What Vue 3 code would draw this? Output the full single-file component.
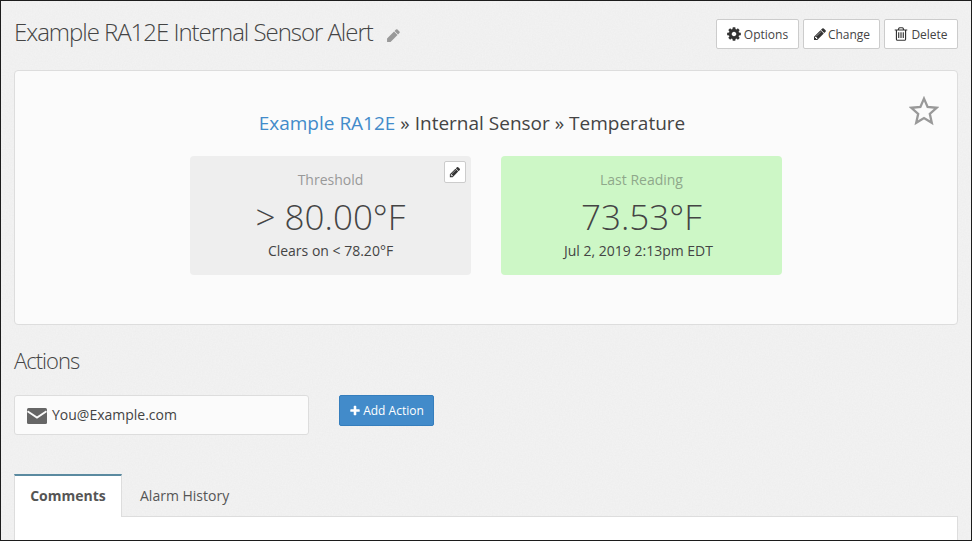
<script setup>
const buttons = [
  { label: 'Options', icon: 'cog', w: 83 },
  { label: 'Change', icon: 'pencil', w: 77 },
  { label: 'Delete', icon: 'trash', w: 74 },
]
const solidPencil = 'M960 416l416 416-832 832h-416v-416zM1643 512q0 53-37 90l-166 166-416-416 166-165q36-38 90-38 53 0 91 38l235 234q37 39 37 91z'
const paths = {
  cog: 'M1152 896q0-106-75-181t-181-75-181 75-75 181 75 181 181 75 181-75 75-181zm512-109v222q0 12-8 23t-20 13l-185 28q-19 54-39 91 35 50 107 138 10 12 10 25t-9 23q-27 37-99 108t-94 71q-12 0-26-9l-138-108q-44 23-91 38-16 136-29 186-7 28-36 28h-222q-14 0-24.5-8.5t-11.5-21.5l-28-184q-49-16-90-37l-141 107q-10 9-25 9-14 0-25-11-126-114-165-168-7-10-7-23 0-12 8-23 15-21 51-66.5t54-70.5q-27-50-41-99l-183-27q-13-2-21-12.5t-8-23.5v-222q0-12 8-23t19-13l186-28q14-46 39-92-40-57-107-138-10-12-10-24 0-10 9-23 26-36 98.5-107.5t94.5-71.5q13 0 26 10l138 107q44-23 91-38 16-136 29-186 7-28 36-28h222q14 0 24.5 8.5t11.5 21.5l28 184q49 16 90 37l142-107q9-9 24-9 13 0 25 10 129 119 165 170 7 8 7 22 0 12-8 23-15 21-51 66.5t-54 70.5q26 50 41 98l183 28q13 2 21 12.5t8 23.5z',
  pencil: 'M491 1536l91-91-235-235-91 91v107h128v128h107zm523-928q0-22-22-22-10 0-17 7l-542 542q-7 7-7 17 0 22 22 22 10 0 17-7l542-542q7-7 7-17zm-54-192l416 416-832 832h-416v-416zm683 96q0 53-37 90l-166 166-416-416 166-165q36-38 90-38 53 0 91 38l235 234q37 39 37 91z',
  trash: 'M704 736v576q0 14-9 23t-23 9h-64q-14 0-23-9t-9-23v-576q0-14 9-23t23-9h64q14 0 23 9t9 23zm256 0v576q0 14-9 23t-23 9h-64q-14 0-23-9t-9-23v-576q0-14 9-23t23-9h64q14 0 23 9t9 23zm256 0v576q0 14-9 23t-23 9h-64q-14 0-23-9t-9-23v-576q0-14 9-23t23-9h64q14 0 23 9t9 23zm128 724v-948h-896v948q0 22 7 40.5t14.5 27 10.5 8.5h832q3 0 10.5-8.5t14.5-27 7-40.5zm-672-1076h448l-48-117q-7-9-17-11h-317q-10 2-17 11zm928 32v64q0 14-9 23t-23 9h-96v948q0 83-47 143.5t-113 60.5h-832q-66 0-113-58.5t-47-141.5v-952h-96q-14 0-23-9t-9-23v-64q0-14 9-23t23-9h309l70-167q15-37 54-63t79-26h320q40 0 79 26t54 63l70 167h309q14 0 23 9t9 23z',
  plus: 'M1600 736v192q0 40-28 68t-68 28h-416v416q0 40-28 68t-68 28h-192q-40 0-68-28t-28-68v-416h-416q-40 0-68-28t-28-68v-192q0-40 28-68t68-28h416v-416q0-40 28-68t68-28h192q40 0 68 28t28 68v416h416q40 0 68 28t28 68z',
}
</script>

<template>
  <div class="frame">
    <svg class="noise" width="972" height="541" aria-hidden="true">
      <filter id="grain" x="0" y="0" width="100%" height="100%">
        <feTurbulence type="fractalNoise" baseFrequency="0.7" numOctaves="2" seed="4" />
        <feColorMatrix type="matrix" values="0 0 0 0 0.55  0 0 0 0 0.55  0 0 0 0 0.55  0 0 0 0.14 -0.03" />
      </filter>
      <rect width="972" height="541" filter="url(#grain)" />
    </svg>
    <div class="page">
      <header class="head">
        <h1 class="title">Example RA12E Internal Sensor Alert</h1>
        <svg class="title-edit" viewBox="0 0 1792 1792"><path :d="solidPencil" /></svg>
        <div class="head-btns">
          <button v-for="b in buttons" :key="b.label" class="btn" :style="{ width: b.w + 'px' }">
            <svg class="ico" :class="'ico-' + b.icon" viewBox="0 0 1792 1792"><path :d="paths[b.icon]" /></svg>{{ b.label }}
          </button>
        </div>
      </header>

      <section class="card">
        <svg class="star" viewBox="0 0 30 30"><polygon points="15,2.6 18.6,11 27.6,11.8 20.8,17.8 22.8,26.8 15,22 7.2,26.8 9.2,17.8 2.4,11.8 11.4,11" /></svg>
        <div class="crumb"><a class="link">Example RA12E</a> » Internal Sensor » Temperature</div>
        <div class="stats">
          <div class="stat grey">
            <button class="mini"><svg viewBox="0 0 1792 1792"><path :d="paths.pencil" /></svg></button>
            <div class="stat-label">Threshold</div>
            <div class="stat-value">&gt; 80.00°F</div>
            <div class="stat-sub">Clears on &lt; 78.20°F</div>
          </div>
          <div class="stat green">
            <div class="stat-label">Last Reading</div>
            <div class="stat-value">73.53°F</div>
            <div class="stat-sub">Jul 2, 2019 2:13pm EDT</div>
          </div>
        </div>
      </section>

      <h2 class="actions-title">Actions</h2>
      <div class="actions">
        <div class="action-item">
          <svg class="mail" viewBox="0 0 20 16">
            <rect width="20" height="16" rx="1.5" />
            <path d="M0.5 3.2 L10 9.6 L19.5 3.2" />
          </svg>
          <span class="mail-text">You@Example.com</span>
        </div>
        <button class="add"><svg viewBox="0 0 1792 1792"><path :d="paths.plus" /></svg>Add Action</button>
      </div>

      <nav class="tabs">
        <div class="tab active">Comments</div>
        <div class="tab">Alarm History</div>
      </nav>
      <div class="panel"></div>
    </div>
  </div>
</template>

<style>
html, body { margin: 0; padding: 0; }
</style>

<style scoped>
.frame {
  position: relative;
  width: 972px;
  height: 541px;
  box-sizing: border-box;
  border: 1px solid #1c1c1c;
  background: #f2f2f2;
  overflow: hidden;
  font-family: "Open Sans", sans-serif;
  color: #444;
}
.noise {
  position: absolute;
  left: 0;
  top: 0;
}
.page {
  position: relative;
  padding: 0 13px;
}
.head {
  display: flex;
  align-items: flex-start;
  height: 69px;
}
.title {
  margin: 14px 0 0 0;
  font-size: 24px;
  line-height: 34px;
  font-weight: 300;
  color: #444;
  letter-spacing: -1.03px;
  white-space: nowrap;
}
.title-edit {
  width: 15px;
  height: 15px;
  margin: 27px 0 0 13px;
  fill: #999;
}
.head-btns {
  margin-left: auto;
  margin-top: 18px;
  display: flex;
  gap: 4px;
}
.btn {
  height: 30px;
  box-sizing: border-box;
  padding: 0;
  border: 1px solid #ccc;
  border-radius: 2px;
  background: #fff;
  font: 400 12px "Open Sans", sans-serif;
  color: #444;
  display: flex;
  align-items: center;
  justify-content: center;
  gap: 2px;
}
.ico { width: 14px; height: 14px; fill: #333; }
.ico-cog { width: 16px; height: 16px; margin-left: -1px; }
.ico-pencil { margin-right: -1px; }
.ico-trash { width: 16px; height: 16px; margin-left: -1px; }
.card {
  position: relative;
  box-sizing: border-box;
  height: 255px;
  background: #fbfbfb;
  border: 1px solid #ddd;
  border-radius: 4px;
  padding-top: 38px;
}
.star {
  position: absolute;
  top: 25px;
  right: 18px;
  width: 30px;
  height: 30px;
  fill: none;
  stroke: #999;
  stroke-width: 2.3;
}
.crumb {
  text-align: center;
  font-size: 19px;
  line-height: 28px;
  color: #444;
  padding-right: 28px;
}
.link { color: #428bca; }
.stats {
  display: flex;
  justify-content: center;
  gap: 30px;
  margin-top: 19px;
}
.stat {
  position: relative;
  width: 281px;
  height: 119px;
  box-sizing: border-box;
  border-radius: 4px;
  text-align: center;
  padding-top: 14px;
}
.grey { background: #eee; }
.green { background: #cdf7c6; }
.mini {
  position: absolute;
  top: 5px;
  right: 5px;
  width: 22px;
  height: 22px;
  padding: 0;
  background: #fff;
  border: 1px solid #ccc;
  border-radius: 2px;
  display: flex;
  align-items: center;
  justify-content: center;
}
.mini svg { width: 12px; height: 12px; fill: #333; }
.stat-label {
  font-size: 14px;
  line-height: 20px;
  color: #999;
}
.green .stat-label { color: #8fa88b; }
.stat-value {
  font-size: 35px;
  line-height: 50px;
  font-weight: 300;
  color: #444;
  margin-top: 2px;
}
.stat-sub {
  font-size: 14px;
  line-height: 20px;
  color: #444;
  margin-top: -1px;
}
.green .stat-sub { padding-right: 6px; }
.actions-title {
  margin: 20px 0 0;
  font-size: 22px;
  line-height: 30px;
  font-weight: 300;
  color: #444;
  letter-spacing: -1px;
}
.actions {
  display: flex;
  align-items: flex-start;
  gap: 30px;
  margin-top: 20px;
}
.action-item {
  width: 295px;
  height: 40px;
  box-sizing: border-box;
  background: #fbfbfb;
  border: 1px solid #ddd;
  border-radius: 3px;
  display: flex;
  align-items: center;
  padding-left: 12px;
  gap: 5px;
  font-size: 14px;
  color: #444;
}
.mail { width: 20px; height: 16px; margin-top: 1px; }
.mail rect { fill: #666; }
.mail path { fill: none; stroke: #fbfbfb; stroke-width: 1.8; }
.mail-text { position: relative; top: -1px; }
.add {
  width: 95px;
  height: 31px;
  box-sizing: border-box;
  padding: 0;
  border: 1px solid #357ebd;
  border-radius: 2px;
  background: #428bca;
  color: #fff;
  font: 400 12px "Open Sans", sans-serif;
  display: flex;
  align-items: center;
  justify-content: center;
  gap: 2px;
}
.add svg { width: 12px; height: 12px; fill: #fff; }
.tabs {
  display: flex;
  margin-top: 39px;
  height: 42px;
}
.tab {
  padding: 0 18px;
  font-size: 14px;
  line-height: 43px;
  color: #555;
}
.tab.active {
  width: 108px;
  box-sizing: border-box;
  padding: 0;
  text-align: center;
  font-weight: 700;
  background: #fff;
  border-top: 2px solid #5a8aa0;
  border-left: 1px solid #ddd;
  border-right: 1px solid #ddd;
  line-height: 40px;
  height: 43px;
  position: relative;
}
.panel {
  height: 60px;
  background: #fff;
  border: 1px solid #ddd;
}
</style>
